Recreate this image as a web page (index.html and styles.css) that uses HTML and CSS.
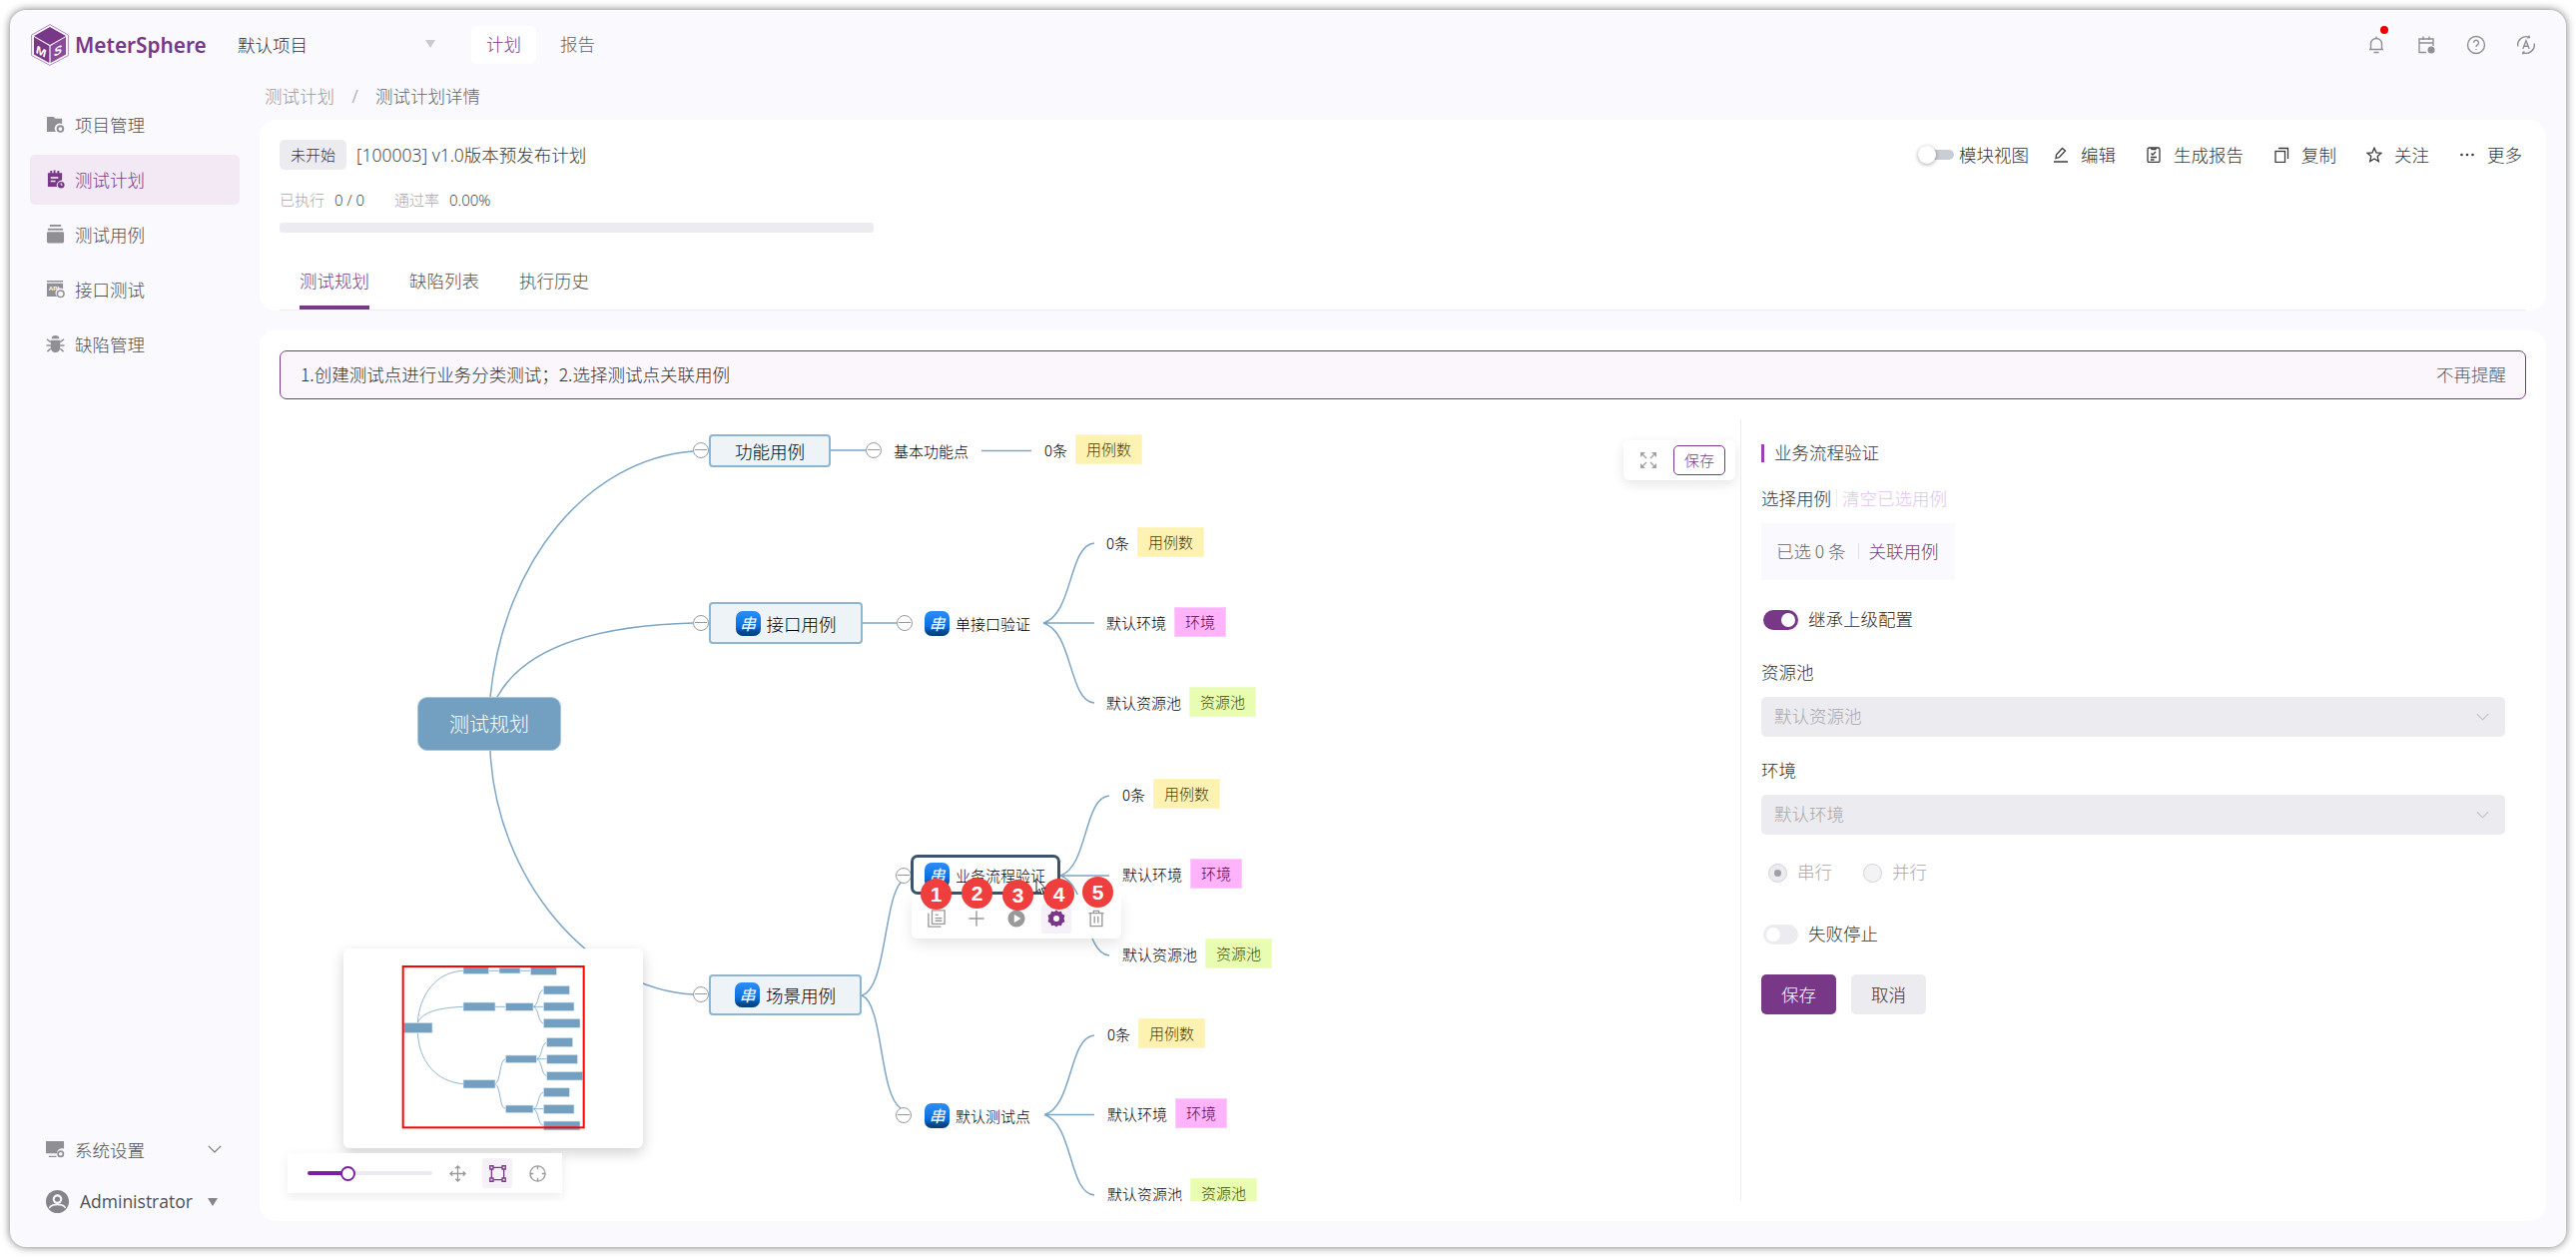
FILE: index.html
```html
<!DOCTYPE html>
<html lang="zh-CN">
<head>
<meta charset="utf-8">
<title>MeterSphere</title>
<link rel="stylesheet" href="styles.css">
</head>
<body>
<div class="window">
  <header class="topbar">
    <div class="brand">
      <svg class="logo" viewBox="0 0 38 42">
        <path d="M19 .6 37.4 11v20.600L19 41.400.6 31.600V11z" fill="none" stroke="#b48cc0" stroke-width="1"/>
        <path d="M19 3 35 12 19 21 3 12z" fill="#783887"/>
        <path d="M3 13 18.400 22V39L3 30.400z" fill="#783887"/>
        <path d="M35 13 19.600 22V39L35 30.400z" fill="#8b4a9a"/>
        <text class="logo-m" transform="translate(5 29) skewY(28)">M</text>
        <text class="logo-s" transform="translate(23 33) skewY(-28)">S</text>
      </svg>
      <span class="brand-name">MeterSphere</span>
    </div>
    <div class="project">
      <span>默认项目</span>
      <i class="tri"></i>
    </div>
    <nav class="top-tabs">
      <a class="top-tab top-tab-on">计划</a>
      <a class="top-tab">报告</a>
    </nav>
    <div class="top-icons">
      <span class="top-icon">
        <svg viewBox="0 0 20 20" class="i-stroke"><path d="M4.500 14.500V9a5.500 5.500 0 0 1 11 0v5.500M3 14.500h14M7.500 17.500h5M10 1.500v2"/></svg>
        <i class="red-dot"></i>
      </span>
      <span class="top-icon">
        <svg viewBox="0 0 20 20" class="i-stroke"><path d="M10 17.500H3V4h14v7M3 8h14M7 1.500V5M13 1.500V5"/><circle cx="15" cy="15" r="3.500" fill="#8f8f94" stroke="none"/></svg>
      </span>
      <span class="top-icon">
        <svg viewBox="0 0 20 20" class="i-stroke"><circle cx="10" cy="10" r="8.500"/><path d="M7.500 7.800a2.500 2.500 0 1 1 3.800 2.100c-.9.600-1.300 1-1.300 2M10 14v.8"/></svg>
      </span>
      <span class="top-icon">
        <svg viewBox="0 0 20 20" class="i-stroke"><path d="M1.800 11.500A8.400 8.400 0 0 1 13 2.200M18.200 8.500A8.400 8.400 0 0 1 7 17.800M13 .6l.3 2-2 .6M7 19.400l-.3-2 2-.6"/><path d="M6.800 14 10 5.800l3.200 8.200M8 11.200h4"/></svg>
      </span>
    </div>
  </header>

  <div class="shell">
    <aside class="sidebar">
      <ul class="nav">
        <li class="nav-item">
          <svg class="nav-icon" viewBox="0 0 20 20"><path d="M1 2h7l2 2h7v5.500a5.500 5.500 0 0 0-6.500 8.500H1z"/><circle cx="15.200" cy="14.800" r="3" fill="none" stroke="#8f8f94" stroke-width="2"/></svg>
          <span>项目管理</span>
        </li>
        <li class="nav-item nav-item-on">
          <svg class="nav-icon" viewBox="0 0 20 20"><path d="M2 3.500h2.500V1h2v2.500h1.500V.5h2v3h2V1h2v2.500H17v7.500a5.500 5.500 0 0 0-5.500 7H2z"/><path d="M5 8.500h8M5 12h5" stroke="#fff" stroke-width="1.600"/><circle cx="16" cy="16" r="3.500"/><path d="M16 14v2h1.500" stroke="#fff" fill="none"/></svg>
          <span>测试计划</span>
        </li>
        <li class="nav-item">
          <svg class="nav-icon" viewBox="0 0 20 20"><rect x="4" y="0" width="12" height="2"/><rect x="2" y="4" width="16" height="2"/><rect x="1" y="7.500" width="18" height="12" rx="1.500"/></svg>
          <span>测试用例</span>
        </li>
        <li class="nav-item">
          <svg class="nav-icon" viewBox="0 0 20 20"><path d="M1 1h17v1.500H1zM1 4h17v6a5 5 0 0 0-6 8H1z"/><text class="api-text" x="3" y="12">API</text><circle cx="15.500" cy="15" r="3.500" fill="none" stroke="#8f8f94" stroke-width="1.600"/></svg>
          <span>接口测试</span>
        </li>
        <li class="nav-item">
          <svg class="nav-icon" viewBox="0 0 20 20"><path d="M6 4.500a4 3.500 0 0 1 8 0zM5 6h10v8a5 5 0 0 1-10 0z"/><path d="M1 5l4 3M19 5l-4 3M.5 11.500H5M19.500 11.500H15M1.500 18l3.500-3M18.500 18 15 15" stroke="#8f8f94" stroke-width="1.600" fill="none"/></svg>
          <span>缺陷管理</span>
        </li>
      </ul>
      <div class="side-bottom">
        <div class="nav-item">
          <svg class="nav-icon" viewBox="0 0 20 20"><path d="M0 1h19v8a5.500 5.500 0 0 0-7.500 5H0zM3 16.500h8v1.500H3z"/><circle cx="15.500" cy="14.500" r="2.800" fill="none" stroke="#8f8f94" stroke-width="1.800"/></svg>
          <span>系统设置</span>
          <svg class="side-chevron" viewBox="0 0 14 8"><path d="M.8.800 7 7l6.200-6.200"/></svg>
        </div>
        <div class="user">
          <svg class="avatar" viewBox="0 0 24 24"><circle cx="12" cy="12" r="12" fill="#84848a"/><circle cx="12" cy="9.500" r="5" fill="#f9f9fe"/><circle cx="12" cy="9.500" r="2.800" fill="#84848a"/><path d="M3 18c2-3 5.500-3.800 9-3.800s7 .8 9 3.800l-1 1.200c-2-2.600-5-3.200-8-3.200s-6 .6-8 3.200z" fill="#f9f9fe"/></svg>
          <span class="user-name">Administrator</span>
          <i class="tri tri-dark"></i>
        </div>
      </div>
    </aside>

    <main class="main">
      <div class="crumbs"><span class="crumb-muted">测试计划</span><span class="crumb-sep">/</span><span>测试计划详情</span></div>

      <section class="card card-head">
        <div class="head-row">
          <div class="head-title">
            <span class="status">未开始</span>
            <span class="plan-name">[100003] v1.0版本预发布计划</span>
          </div>
          <div class="actions">
            <div class="action action-toggle">
              <span class="mini-toggle"><i class="mini-knob"></i></span>
              <span>模块视图</span>
            </div>
            <div class="action">
              <svg class="act-icon" viewBox="0 0 16 16"><path d="M1 15h14M3 11.500 3.500 8 9.500 1.500l3 2.500-6 6.500z"/></svg>
              <span>编辑</span>
            </div>
            <div class="action">
              <svg class="act-icon" viewBox="0 0 16 16"><rect x="2" y="1" width="12" height="14.500" rx="1.500"/><path d="M6 1v1.500h4V1M5.500 6.500 7 8l3-3M5 10.500h6M5 13h3.500"/></svg>
              <span>生成报告</span>
            </div>
            <div class="action">
              <svg class="act-icon" viewBox="0 0 16 16"><rect x="2" y="4.500" width="9.500" height="11"/><path d="M5 1.500h9.500V12"/></svg>
              <span>复制</span>
            </div>
            <div class="action">
              <svg class="act-icon" viewBox="0 0 16 16"><path d="M8 1.200 10 5.800l5 .5-3.800 3.300 1.100 5L8 12l-4.300 2.600 1.100-5L1 6.300l5-.5z"/></svg>
              <span>关注</span>
            </div>
            <div class="action">
              <svg class="act-icon act-fill" viewBox="0 0 16 16"><circle cx="2.500" cy="8" r="1.300"/><circle cx="8" cy="8" r="1.300"/><circle cx="13.500" cy="8" r="1.300"/></svg>
              <span>更多</span>
            </div>
          </div>
        </div>
        <div class="stats">
          <span class="stat-label">已执行</span><span class="stat-val">0 / 0</span>
          <span class="stat-label stat-second">通过率</span><span class="stat-val">0.00%</span>
        </div>
        <div class="progress"></div>
        <div class="tabs">
          <a class="tab tab-on">测试规划</a>
          <a class="tab">缺陷列表</a>
          <a class="tab">执行历史</a>
        </div>
      </section>

      <section class="card card-body">
        <div class="alert">
          <span>1.创建测试点进行业务分类测试；2.选择测试点关联用例</span>
          <span class="alert-close">不再提醒</span>
        </div>
        <div class="work">
          <div class="canvas">
            <svg class="links" viewBox="280 420 1463 783">
              <path d="M491 698C505 560 590 460 694 452"/>
              <path d="M498 698C530 640 620 626 694 624"/>
              <path d="M491 752C497 880 590 990 694 996"/>
              <path d="M832 451H867M983 451.500H1033"/>
              <path d="M864 624H898"/>
              <path d="M1045 624C1075 615 1070 546 1096 544M1045 624H1096M1045 624C1075 633 1070 702 1096 704"/>
              <path d="M863 997C888 990 885 900 903 883M863 997C885 1005 880 1095 902 1110"/>
              <path d="M1062 877C1090 868 1085 799 1111 797M1062 877H1111M1062 877C1090 886 1085 955 1111 957"/>
              <path d="M1046 1116.500C1075 1108 1070 1039 1096 1037M1046 1116.500H1096M1046 1116.500C1075 1125 1070 1195 1096 1197"/>
            </svg>

            <div class="node root">测试规划</div>

            <i class="fold f1"></i>
            <div class="node main-node m1">功能用例</div>
            <i class="fold f2"></i>
            <div class="node sub s1">基本功能点</div>
            <div class="leaf l1"><span>0条</span><b class="tag tag-y">用例数</b></div>

            <i class="fold f3"></i>
            <div class="node main-node m2"><i class="ser">串</i>接口用例</div>
            <i class="fold f4"></i>
            <div class="node sub s2"><i class="ser">串</i>单接口验证</div>
            <div class="leaf l2"><span>0条</span><b class="tag tag-y">用例数</b></div>
            <div class="leaf l3"><span>默认环境</span><b class="tag tag-p">环境</b></div>
            <div class="leaf l4"><span>默认资源池</span><b class="tag tag-g">资源池</b></div>

            <i class="fold f5"></i>
            <div class="node main-node m3"><i class="ser">串</i>场景用例</div>

            <i class="fold f6"></i>
            <div class="node sub s3 selected"><i class="ser">串</i>业务流程验证</div>
            <div class="leaf l5"><span>0条</span><b class="tag tag-y">用例数</b></div>
            <div class="leaf l6"><span>默认环境</span><b class="tag tag-p">环境</b></div>
            <div class="leaf l7"><span>默认资源池</span><b class="tag tag-g">资源池</b></div>

            <i class="fold f7"></i>
            <div class="node sub s4"><i class="ser">串</i>默认测试点</div>
            <div class="leaf l8"><span>0条</span><b class="tag tag-y">用例数</b></div>
            <div class="leaf l9"><span>默认环境</span><b class="tag tag-p">环境</b></div>
            <div class="leaf l10"><span>默认资源池</span><b class="tag tag-g">资源池</b></div>

            <div class="node-tools">
              <span class="tool">
                <svg viewBox="0 0 20 20" class="tool-svg"><path d="M5 1h14v15H5zM1 4v15h14M8.500 6H12M8.500 9.500H16M8.500 12.500H16"/></svg>
              </span>
              <span class="tool">
                <svg viewBox="0 0 20 20" class="tool-svg"><path d="M1.500 10h17M10 1.500v17"/></svg>
              </span>
              <span class="tool">
                <svg viewBox="0 0 20 20"><circle cx="10" cy="10" r="9.500" fill="#999"/><path d="M7.500 5.500 15 10l-7.500 4.500z" fill="#fff"/></svg>
              </span>
              <span class="tool tool-on">
                <svg viewBox="0 0 20 20"><path d="M10 .5l2.300 2 3.200-.6 1 3.100 2.900 1.500-1 3.500 1 3.500-2.900 1.500-1 3.100-3.200-.6-2.300 2-2.300-2-3.200.6-1-3.100L.6 13.500l1-3.500-1-3.500L3.500 5l1-3.100 3.200.6z" fill="#783887"/><circle cx="10" cy="10" r="3.300" fill="#fff"/></svg>
              </span>
              <span class="tool">
                <svg viewBox="0 0 20 20" class="tool-svg"><path d="M1.500 4H18.500M7 4V1.500h6V4M3.500 4v14.500h13V4M8 7.500v7.500M12 7.500v7.500"/></svg>
              </span>
            </div>
            <span class="badge b1">1</span>
            <span class="badge b2">2</span>
            <span class="badge b3">3</span>
            <span class="badge b4">4</span>
            <span class="badge b5">5</span>
            <svg class="cursor" viewBox="0 0 12 20"><path d="M1 1v15l3.500-3.300 2.300 5.800 2.400-1-2.300-5.500H11z" fill="#fff" stroke="#111" stroke-width="1"/></svg>

            <div class="map-actions">
              <svg class="expand" viewBox="0 0 18 18"><path class="expand-head" d="M1 1h5L1 6zM17 1v5l-5-5zM1 17v-5l5 5zM17 17h-5l5-5z"/><path class="expand-stem" d="M2.500 2.500 7 7M15.500 2.500 11 7M2.500 15.500 7 11M15.500 15.500 11 11"/></svg>
              <button class="map-save">保存</button>
            </div>

            <div class="minimap">
              <svg viewBox="192 90 900 600" class="mini-svg">
                <g class="mini-lines">
                  <path d="M415 313C420 230 470 160 552 157M415 313C430 280 480 268 552 265M415 344C420 430 470 490 552 497M628 157H660M723 157H754M648 265H679M762 265C780 262 775 215 793 215M762 265H793M762 265C780 268 775 312 793 315M648 497C665 490 660 425 679 422M648 497C665 505 660 570 679 572M772 422C790 420 785 375 803 372M772 422H803M772 422C790 425 785 470 803 473M762 572C780 570 775 525 793 522M762 572H793M762 572C780 575 775 620 793 622"/>
                </g>
                <g class="mini-rects">
                  <rect x="373" y="313" width="86" height="31"/>
                  <rect x="552" y="146" width="76" height="21"/><rect x="660" y="148" width="63" height="17"/><rect x="754" y="146" width="78" height="24"/>
                  <rect x="552" y="252" width="96" height="26"/><rect x="679" y="254" width="83" height="23"/>
                  <rect x="793" y="202" width="78" height="26"/><rect x="793" y="252" width="92" height="26"/><rect x="793" y="301" width="110" height="27"/>
                  <rect x="552" y="485" width="96" height="25"/><rect x="679" y="411" width="93" height="23"/>
                  <rect x="803" y="358" width="78" height="28"/><rect x="803" y="409" width="92" height="27"/><rect x="803" y="460" width="108" height="26"/>
                  <rect x="679" y="561" width="83" height="23"/>
                  <rect x="793" y="509" width="78" height="27"/><rect x="793" y="559" width="92" height="27"/><rect x="793" y="609" width="110" height="27"/>
                </g>
                <rect class="mini-view" x="371" y="144" width="543" height="484"/>
              </svg>
            </div>

            <div class="zoombar">
              <div class="slider"><i class="slider-fill"></i><i class="slider-thumb"></i></div>
              <span class="zoom-btn">
                <svg viewBox="0 0 18 18" class="zoom-svg"><path d="M9 1v16M1 9h16M6.500 3.500 9 1l2.500 2.500M6.500 14.500 9 17l2.500-2.500M3.500 6.500 1 9l2.500 2.500M14.500 6.500 17 9l-2.500 2.500"/></svg>
              </span>
              <span class="zoom-btn zoom-btn-on">
                <svg viewBox="0 0 18 18" class="zoom-svg zoom-svg-on"><path d="M2.500 2.500h13v13h-13z"/><path class="h" d="M.8.800h3.400v3.400H.8zM13.800.800h3.400v3.400h-3.400zM.8 13.800h3.400v3.400H.8zM13.800 13.800h3.400v3.400h-3.400z"/></svg>
              </span>
              <span class="zoom-btn">
                <svg viewBox="0 0 18 18" class="zoom-svg"><circle cx="9" cy="9" r="8"/><path d="M9 1v3.500M9 13.500V17M1 9h3.500M13.500 9H17"/></svg>
              </span>
            </div>
          </div>

          <div class="panel">
            <div class="panel-title">业务流程验证</div>
            <div class="panel-pick">
              <span>选择用例</span><i class="pick-sep"></i><span class="pick-clear">清空已选用例</span>
            </div>
            <div class="picked">
              <span class="picked-count">已选 0 条</span><i class="picked-sep"></i><span class="picked-link">关联用例</span>
            </div>
            <div class="switch-row switch-row-first">
              <span class="switch switch-on"><i class="switch-knob"></i></span><span class="lift">继承上级配置</span>
            </div>
            <label class="field-label field-pool">资源池</label>
            <div class="select"><span class="lift">默认资源池</span><svg class="sel-chevron" viewBox="0 0 14 8"><path d="M.8.800 7 7l6.200-6.200"/></svg></div>
            <label class="field-label field-env">环境</label>
            <div class="select"><span class="lift">默认环境</span><svg class="sel-chevron" viewBox="0 0 14 8"><path d="M.8.800 7 7l6.200-6.200"/></svg></div>
            <div class="radios">
              <span class="radio-item"><i class="radio radio-on"></i><span class="lift">串行</span></span>
              <span class="radio-item"><i class="radio"></i><span class="lift">并行</span></span>
            </div>
            <div class="switch-row switch-row-stop">
              <span class="switch"><i class="switch-knob"></i></span><span class="lift">失败停止</span>
            </div>
            <div class="buttons">
              <button class="btn btn-primary">保存</button>
              <button class="btn">取消</button>
            </div>
          </div>
        </div>
      </section>
    </main>
  </div>
</div>
</body>
</html>
```
FILE: styles.css
```css
* { box-sizing: border-box; }
html, body { margin: 0; padding: 0; height: 100%; }
body {
  background: #fff;
  font-family: "Noto Sans CJK SC", "Noto Sans", sans-serif;
  font-size: 17.5px;
  font-weight: 300;
  color: #323233;
  overflow: hidden;
}
ul { list-style: none; margin: 0; padding: 0; }
i { font-style: normal; display: block; }
button { font: inherit; cursor: pointer; }
.lift { margin-top: -3px; }

.window {
  width: 2560px;
  height: 1239px;
  margin: 10px 0 0 10px;
  background: #f9f9fe;
  border-radius: 16px;
  box-shadow: 0 0 9px rgba(0, 0, 0, .55);
  display: flex;
  flex-direction: column;
  overflow: hidden;
}

/* top bar */
.topbar { height: 70px; flex: none; display: flex; align-items: center; padding: 0 30px 0 21px; }
.brand { width: 207px; display: flex; align-items: center; gap: 6px; }
.logo { width: 38px; height: 42px; display: block; }
.logo-m, .logo-s { fill: #fff; font-family: "Liberation Sans", sans-serif; font-weight: 700; font-size: 12px; font-style: italic; }
.brand-name { font-family: "Noto Sans", sans-serif; font-weight: 600; font-size: 20.800px; color: #783887; }
.project { width: 198px; display: flex; align-items: center; justify-content: space-between; padding-bottom: 2px; }
.tri { width: 0; height: 0; border-left: 5.500px solid transparent; border-right: 5.500px solid transparent; border-top: 8px solid #c9c9ce; }
.tri-dark { border-top-color: #84848a; margin-left: 15px; margin-top: 2px; }
.top-tabs { display: flex; margin-left: 36px; gap: 9px; }
.top-tab { height: 38px; line-height: 36px; padding: 0 15px; border-radius: 5px; color: #646466; }
.top-tab-on { background: #fff; color: #783887; }
.top-icons { margin-left: auto; display: flex; gap: 30px; }
.top-icon { width: 20px; height: 20px; position: relative; display: block; }
.top-icon svg { width: 20px; height: 20px; display: block; }
.i-stroke { fill: none; stroke: #8f8f94; stroke-width: 1.400; }
.red-dot { position: absolute; width: 8px; height: 8px; background: #e80000; border-radius: 50%; left: 14px; top: -9px; }

/* shell */
.shell { flex: 1; min-height: 0; display: flex; }
.sidebar { width: 250px; flex: none; padding: 20px 20px 22px; display: flex; flex-direction: column; }
.nav { display: flex; flex-direction: column; gap: 5px; }
.nav-item { height: 50px; padding: 0 0 2px 16px; display: flex; align-items: center; gap: 10px; border-radius: 5px; color: #4f4f52; }
.nav-item-on { background: #f2e9f5; color: #783887; }
.nav-icon { width: 19px; height: 19px; flex: none; fill: #8f8f94; }
.nav-item-on .nav-icon { fill: #783887; }
.api-text { fill: #fff; font-family: "Liberation Sans", sans-serif; font-size: 6.500px; font-weight: 700; }
.side-bottom { margin-top: auto; display: flex; flex-direction: column; }
.side-chevron { width: 14px; height: 8px; margin-left: auto; margin-right: 18px; fill: none; stroke: #77777c; stroke-width: 1.200; }
.user { height: 50px; padding: 2px 0 0 16px; display: flex; align-items: center; }
.avatar { width: 23px; height: 23px; flex: none; margin-right: 11px; }
.user-name { font-family: "Open Sans", sans-serif; font-weight: 400; font-size: 17.500px; color: #4f4f52; }

/* main */
.main { flex: 1; min-width: 0; padding-right: 20px; padding-bottom: 26px; display: flex; flex-direction: column; }
.crumbs { height: 32px; line-height: 32px; margin-bottom: 8px; padding-left: 5px; color: #646466; }
.crumb-muted { color: #98989d; }
.crumb-sep { margin: 0 17.500px; color: #98989d; font-family: "Noto Sans", sans-serif; }
.card { background: #fff; border-radius: 16px; }
.card-head { height: 191px; flex: none; padding: 20px 24px 0 20px; }
.head-row { height: 30px; display: flex; align-items: center; justify-content: space-between; }
.head-title { display: flex; align-items: center; gap: 10px; }
.status { height: 30px; line-height: 29px; padding: 0 11px; background: #ecebef; border-radius: 5px; font-size: 15px; }
.plan-name { font-family: "Open Sans", "Noto Sans CJK SC", sans-serif; font-size: 17.500px; margin-top: -2px; }
.actions { display: flex; align-items: center; gap: 30px; }
.action { display: flex; align-items: center; gap: 12px; padding-bottom: 1px; }
.action-toggle { gap: 5px; margin-right: -6px; }
.act-icon { width: 16px; height: 16px; fill: none; stroke: #3c3c40; stroke-width: 1.300; flex: none; }
.act-fill { fill: #3c3c40; stroke: none; }
.mini-toggle { width: 36px; height: 10px; background: #c9cdd4; border-radius: 5px; position: relative; display: block; }
.mini-knob { position: absolute; left: 0; top: -4px; width: 18px; height: 18px; border-radius: 50%; background: #fff; box-shadow: 0 1px 4px rgba(0, 0, 0, .35); }
.stats { margin-top: 20px; height: 20px; line-height: 20px; display: flex; font-size: 15px; font-family: "Open Sans", "Noto Sans CJK SC", sans-serif; }
.stat-label { color: #a8a6ad; margin-right: 10px; }
.stat-second { margin-left: 30px; }
.progress { margin-top: 13px; width: 595px; height: 10px; background: #ecebef; border-radius: 3px; }
.tabs { margin: 21px -4px 0 0; display: flex; gap: 40px; padding-left: 20px; border-bottom: 1px solid #ecebef; height: 57px; }
.tab { height: 56px; padding-top: 4px; line-height: 46px; color: #4f4f52; }
.tab-on { color: #783887; border-bottom: 4px solid #783887; }

.card-body { margin-top: 20px; flex: 1; min-height: 0; padding: 20px; display: flex; flex-direction: column; }
.alert { height: 49px; flex: none; padding: 0 19px 2px 20px; display: flex; align-items: center; justify-content: space-between; background: #faf6fb; border: 1.500px solid #783887; border-radius: 7px; }
.alert-close { color: #5a5a5e; }
.work { margin-top: 20px; flex: 1; min-height: 0; display: flex; }

/* mind map canvas */
.canvas { width: 1463px; flex: none; position: relative; overflow: hidden; color: #000; }
.links { position: absolute; left: 0; top: 0; width: 1463px; height: 783px; fill: none; stroke: #7ba6c5; stroke-width: 1.500; }
.node { position: absolute; display: flex; align-items: center; white-space: nowrap; }
.root { left: 138px; top: 278px; width: 144px; height: 54px; padding-bottom: 2px; justify-content: center; background: #739fc1; border: 1px solid #a9c6da; border-radius: 10px; color: #fff; font-size: 20px; }
.main-node { left: 430px; justify-content: center; background: #edf3f7; border: 2px solid #8fb5d0; border-radius: 4px; font-size: 17.500px; }
.m1 { top: 15px; width: 122px; height: 33px; }
.m2 { top: 183px; width: 154px; height: 42px; }
.m3 { top: 556px; width: 153px; height: 41px; }
.ser { width: 25px; height: 25px; margin-right: 6px; border-radius: 7px; flex: none; background: linear-gradient(#2c8ef7 0, #0a6fe0 62%, #04488f 85%, #063f7a 100%); color: #fff; font-style: italic; font-size: 16px; line-height: 24px; text-align: center; font-weight: 400; }
.sub { font-size: 15px; }
.s1 { left: 615px; top: 20px; height: 22px; }
.s2 { left: 646px; top: 192px; height: 25px; }
.s3 { left: 632px; top: 436px; width: 150px; height: 40px; padding-left: 11px; background: #fff; border: 3.500px solid #3b5469; border-radius: 7px; }
.s4 { left: 646px; top: 685px; height: 25px; }
.fold { position: absolute; width: 16px; height: 16px; background: #fff; border: 1.500px solid #999; border-radius: 50%; }
.fold::after { content: ""; display: block; margin: 5.500px 1px 0; height: 1.500px; background: #999; }
.f1 { left: 414px; top: 23px; }
.f2 { left: 587px; top: 23px; }
.f3 { left: 414px; top: 196px; }
.f4 { left: 618px; top: 196px; }
.f5 { left: 414px; top: 568px; }
.f6 { left: 617px; top: 449px; }
.f7 { left: 617px; top: 689px; }
.leaf { position: absolute; display: flex; align-items: center; gap: 8px; height: 30px; font-size: 15px; white-space: nowrap; }
.l1 { left: 766px; top: 15px; }
.l2 { left: 828px; top: 108px; }
.l3 { left: 828px; top: 188px; }
.l4 { left: 828px; top: 268px; }
.l5 { left: 844px; top: 360px; }
.l6 { left: 844px; top: 440px; }
.l7 { left: 844px; top: 520px; }
.l8 { left: 829px; top: 600px; }
.l9 { left: 829px; top: 680px; }
.l10 { left: 829px; top: 760px; }
.tag { height: 30px; line-height: 27px; padding: 0 10px; font-weight: 300; border: 1px solid; }
.tag-y { background: #fef2b2; border-color: #fef5c5; color: #4a3b00; }
.tag-p { background: #ffb3fb; border-color: #ffcafc; color: #5a0050; }
.tag-g { background: #e8fdb2; border-color: #effdc8; color: #3c4a00; }

.node-tools { position: absolute; left: 633px; top: 476px; width: 210px; height: 44px; background: #fff; border-radius: 0 0 6px 6px; box-shadow: 0 6px 14px rgba(0, 0, 0, .1); display: flex; justify-content: space-between; padding: 9px 10px 5px; }
.tool { width: 30px; height: 30px; border-radius: 3px; display: flex; align-items: center; justify-content: center; }
.tool svg { width: 18px; height: 18px; }
.tool-on { background: #f6f0f8; }
.tool-svg { fill: none; stroke: #999; stroke-width: 1.500; }
.badge { position: absolute; top: 459px; width: 31px; height: 31px; border-radius: 50%; background: #ee3e3e; color: #fff; font-family: "Liberation Sans", sans-serif; font-weight: 700; font-size: 21px; line-height: 31px; text-align: center; }
.b1 { left: 642px; top: 460px; }
.b2 { left: 683px; }
.b3 { left: 724px; top: 461px; }
.b4 { left: 765px; top: 460px; }
.b5 { left: 804px; top: 458px; }
.cursor { position: absolute; left: 757px; top: 459px; width: 11px; height: 18px; }

.map-actions { position: absolute; left: 1346px; top: 21px; width: 112px; height: 40px; background: #fff; border-radius: 6px; box-shadow: 0 4px 12px rgba(0, 0, 0, .1); display: flex; align-items: center; padding-left: 16px; }
.expand { width: 18px; height: 18px; }
.expand-head { fill: #a0a0a5; }
.expand-stem { fill: none; stroke: #a0a0a5; stroke-width: 1.400; }
.map-save { margin-left: 16px; width: 52px; height: 30px; padding: 0 0 2px; font-size: 15px; font-weight: 300; background: #fff; color: #783887; border: 1.500px solid #783887; border-radius: 5px; }

.minimap { position: absolute; left: 64px; top: 530px; width: 300px; height: 200px; background: #fff; border-radius: 6px; box-shadow: 0 5px 14px rgba(0, 0, 0, .18); }
.mini-svg { width: 300px; height: 200px; display: block; }
.mini-lines { fill: none; stroke: #7ba6c5; stroke-width: 2.500; }
.mini-rects { fill: #739fc1; stroke: #dbe7f0; stroke-width: 2; }
.mini-view { fill: none; stroke: #f00; stroke-width: 6; }

.zoombar { position: absolute; left: 8px; top: 735px; width: 275px; height: 40px; background: #fff; box-shadow: 0 4px 12px rgba(0, 0, 0, .08); display: flex; align-items: center; padding-left: 20px; }
.slider { width: 125px; height: 4px; background: #eceaf0; border-radius: 2px; position: relative; margin-right: 10px; }
.slider-fill { position: absolute; left: 0; top: 0; width: 40px; height: 4px; background: #7a1fa2; border-radius: 2px; }
.slider-thumb { position: absolute; left: 33px; top: -5.500px; width: 15px; height: 15px; background: #fff; border: 2.500px solid #7a1fa2; border-radius: 50%; }
.zoom-btn { width: 30px; height: 30px; margin-right: 10px; border-radius: 3px; display: flex; align-items: center; justify-content: center; }
.zoom-btn-on { background: #f6f0f8; }
.zoom-svg { width: 17px; height: 17px; fill: none; stroke: #999; stroke-width: 1.400; }
.zoom-svg-on { stroke: #783887; }
.zoom-svg-on .h { fill: #f6f0f8; }

/* right panel */
.panel { flex: 1; min-width: 0; border-left: 1px solid #ecebef; padding: 25px 21px 0 20px; display: flex; flex-direction: column; align-items: flex-start; }
.panel-title { height: 18px; line-height: 16px; padding-left: 10px; border-left: 3px solid #9a3fb5; margin-bottom: 2px; }
.panel-pick { margin-top: 22px; height: 24px; line-height: 24px; display: flex; align-items: center; }
.pick-sep { width: 1px; height: 18px; background: #ecebef; margin: 0 5px; }
.pick-clear { color: #e0c3ec; }
.picked { margin-top: 13px; width: 194px; height: 57px; background: #f9f9fe; padding: 0 0 2px 15px; display: flex; align-items: center; }
.picked-count { color: #646466; white-space: nowrap; }
.picked-sep { width: 1px; height: 16px; background: #e1e0e6; margin: 0 10px 0 12px; }
.picked-link { color: #783887; white-space: nowrap; }
.switch-row { display: flex; align-items: center; gap: 10px; height: 20px; padding-left: 2px; }
.switch-row-first { margin-top: 30px; }
.switch-row-stop { margin-top: 40px; }
.switch { width: 35px; height: 20px; background: #ecebef; border-radius: 10px; display: flex; align-items: center; padding: 0 3px; }
.switch-knob { width: 14px; height: 14px; background: #fff; border-radius: 50%; }
.switch-on { background: #783887; justify-content: flex-end; }
.field-label { display: block; height: 24px; line-height: 22px; }
.field-pool { margin-top: 31px; }
.field-env { margin-top: 22px; }
.select { margin-top: 12px; width: 100%; height: 40px; padding: 0 16px 0 13px; background: #ecebef; border-radius: 5px; color: #a8a6ad; display: flex; align-items: center; justify-content: space-between; }
.sel-chevron { width: 13px; height: 8px; fill: none; stroke: #c0bfc5; stroke-width: 1.200; }
.radios { margin-top: 26px; height: 24px; display: flex; gap: 31px; padding-left: 7px; color: #a8a6ad; }
.radio-item { display: flex; align-items: center; gap: 10px; }
.radio { width: 19px; height: 19px; border: 1px solid #d3d2d8; border-radius: 50%; background: #f3f3f5; display: flex; align-items: center; justify-content: center; }
.radio-on { background: #ecebef; }
.radio-on::after { content: ""; width: 7px; height: 7px; background: #a0a0a5; border-radius: 50%; }
.buttons { margin-top: 30px; display: flex; gap: 15px; }
.btn { width: 75px; height: 40px; padding: 0 0 2px; font-weight: 300; border: 0; border-radius: 5px; background: #ecebef; color: #323233; }
.btn-primary { background: #783887; color: #fff; }
```
